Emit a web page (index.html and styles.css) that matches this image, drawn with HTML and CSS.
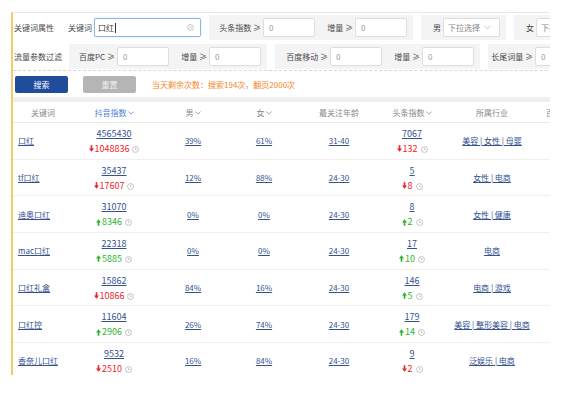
FILE: index.html
```html
<!DOCTYPE html>
<html>

<head>
    <meta charset="utf-8">
    <link rel="stylesheet" href="styles.css">
</head>

<body>
    <svg class="defs" width="0" height="0">
        <symbol id="down" viewBox="0 0 6 8"><path d="M2 0h2v4h2L3 8 0 4h2z"/></symbol>
        <symbol id="up" viewBox="0 0 6 8"><path d="M2 8h2V4h2L3 0 0 4h2z"/></symbol>
        <symbol id="clock" viewBox="0 0 10 10"><circle cx="5" cy="5" r="4.2" fill="none" stroke="currentColor" stroke-width="1"/><path d="M5 2.6V5h1.9" fill="none" stroke="currentColor" stroke-width="0.9"/></symbol>
        <symbol id="caret" viewBox="0 0 8 5"><path d="M0.5 0.5 4 4 7.5 0.5" fill="none" stroke="currentColor" stroke-width="1"/></symbol>
        <symbol id="clear" viewBox="0 0 10 10"><circle cx="5" cy="5" r="4.2" fill="none" stroke="currentColor" stroke-width="0.9"/><path d="M3.4 3.4 6.6 6.6M6.6 3.4 3.4 6.6" stroke="currentColor" stroke-width="0.9"/></symbol>
    </svg>

    <div class="panel">
        <div class="filters">
            <div class="frow">
                <span class="rlabel">关键词属性</span>
                <div class="grp grp-white">
                    <span class="lb lb-26">关键词</span>
                    <div class="inp inp-kw">口红<span class="caret-line"></span>
                        <svg class="clear"><use href="#clear"/></svg>
                    </div>
                </div>
                <div class="grp">
                    <span class="lb lb-52">头条指数 ≥</span>
                    <div class="inp">0</div>
                    <span class="lb lb-38">增量 ≥</span>
                    <div class="inp">0</div>
                </div>
                <div class="grp grp-pr">
                    <span class="lb lb-20">男</span>
                    <div class="inp sel">下拉选择<svg class="chev"><use href="#caret"/></svg></div>
                </div>
                <div class="grp">
                    <span class="lb lb-20">女</span>
                    <div class="inp sel">下拉选择<svg class="chev"><use href="#caret"/></svg></div>
                </div>
            </div>
            <div class="frow">
                <span class="rlabel rlabel-wide">流量参数过滤</span>
                <div class="grp">
                    <span class="lb lb-46">百度PC ≥</span>
                    <div class="inp">0</div>
                    <span class="lb lb-38">增量 ≥</span>
                    <div class="inp">0</div>
                </div>
                <div class="grp">
                    <span class="lb lb-53">百度移动 ≥</span>
                    <div class="inp">0</div>
                    <span class="lb lb-38">增量 ≥</span>
                    <div class="inp">0</div>
                </div>
                <div class="grp">
                    <span class="lb lb-45">长尾词量 ≥</span>
                    <div class="inp">0</div>
                </div>
            </div>
        </div>

        <div class="actions">
            <button class="btn btn-search">搜索</button>
            <button class="btn btn-reset">重置</button>
            <span class="quota">当天剩余次数：搜索194次，翻页2000次</span>
        </div>

        <div class="band"></div>

        <table class="data">
            <colgroup>
                <col class="c-kw"><col class="c-dy"><col class="c-m"><col class="c-f">
                <col class="c-age"><col class="c-tt"><col class="c-ind"><col class="c-bd">
            </colgroup>
            <tr>
                <th class="kw">关键词</th>
                <th class="sorted">抖音指数<svg class="hcaret"><use href="#caret"/></svg></th>
                <th>男<svg class="hcaret"><use href="#caret"/></svg></th>
                <th>女<svg class="hcaret"><use href="#caret"/></svg></th>
                <th>最关注年龄</th>
                <th>头条指数<svg class="hcaret"><use href="#caret"/></svg></th>
                <th>所属行业</th>
                <th class="last">百度指数<svg class="hcaret"><use href="#caret"/></svg></th>
            </tr>
            <tr>
                <td class="kw"><a href="#">口红</a></td>
                <td><a href="#" class="num">4565430</a><div class="chg down"><svg class="arr"><use href="#down"/></svg>1048836<svg class="clk"><use href="#clock"/></svg></div></td>
                <td><a href="#">39%</a></td>
                <td><a href="#">61%</a></td>
                <td><a href="#">31-40</a></td>
                <td><a href="#" class="num">7067</a><div class="chg down"><svg class="arr"><use href="#down"/></svg>132<svg class="clk"><use href="#clock"/></svg></div></td>
                <td><a href="#">美容 | 女性 | 母婴</a></td>
                <td></td>
            </tr>
            <tr>
                <td class="kw"><a href="#">tf口红</a></td>
                <td><a href="#" class="num">35437</a><div class="chg down"><svg class="arr"><use href="#down"/></svg>17607<svg class="clk"><use href="#clock"/></svg></div></td>
                <td><a href="#">12%</a></td>
                <td><a href="#">88%</a></td>
                <td><a href="#">24-30</a></td>
                <td><a href="#" class="num">5</a><div class="chg down"><svg class="arr"><use href="#down"/></svg>8<svg class="clk"><use href="#clock"/></svg></div></td>
                <td><a href="#">女性 | 电商</a></td>
                <td></td>
            </tr>
            <tr>
                <td class="kw"><a href="#">迪奥口红</a></td>
                <td><a href="#" class="num">31070</a><div class="chg up"><svg class="arr"><use href="#up"/></svg>8346<svg class="clk"><use href="#clock"/></svg></div></td>
                <td><a href="#">0%</a></td>
                <td><a href="#">0%</a></td>
                <td><a href="#">24-30</a></td>
                <td><a href="#" class="num">8</a><div class="chg up"><svg class="arr"><use href="#up"/></svg>2<svg class="clk"><use href="#clock"/></svg></div></td>
                <td><a href="#">女性 | 健康</a></td>
                <td></td>
            </tr>
            <tr>
                <td class="kw"><a href="#">mac口红</a></td>
                <td><a href="#" class="num">22318</a><div class="chg up"><svg class="arr"><use href="#up"/></svg>5885<svg class="clk"><use href="#clock"/></svg></div></td>
                <td><a href="#">0%</a></td>
                <td><a href="#">0%</a></td>
                <td><a href="#">24-30</a></td>
                <td><a href="#" class="num">17</a><div class="chg up"><svg class="arr"><use href="#up"/></svg>10<svg class="clk"><use href="#clock"/></svg></div></td>
                <td><a href="#">电商</a></td>
                <td></td>
            </tr>
            <tr>
                <td class="kw"><a href="#">口红礼盒</a></td>
                <td><a href="#" class="num">15862</a><div class="chg down"><svg class="arr"><use href="#down"/></svg>10866<svg class="clk"><use href="#clock"/></svg></div></td>
                <td><a href="#">84%</a></td>
                <td><a href="#">16%</a></td>
                <td><a href="#">24-30</a></td>
                <td><a href="#" class="num">146</a><div class="chg up"><svg class="arr"><use href="#up"/></svg>5<svg class="clk"><use href="#clock"/></svg></div></td>
                <td><a href="#">电商 | 游戏</a></td>
                <td></td>
            </tr>
            <tr>
                <td class="kw"><a href="#">口红控</a></td>
                <td><a href="#" class="num">11604</a><div class="chg up"><svg class="arr"><use href="#up"/></svg>2906<svg class="clk"><use href="#clock"/></svg></div></td>
                <td><a href="#">26%</a></td>
                <td><a href="#">74%</a></td>
                <td><a href="#">24-30</a></td>
                <td><a href="#" class="num">179</a><div class="chg up"><svg class="arr"><use href="#up"/></svg>14<svg class="clk"><use href="#clock"/></svg></div></td>
                <td><a href="#">美容 | 整形美容 | 电商</a></td>
                <td></td>
            </tr>
            <tr>
                <td class="kw"><a href="#">香奈儿口红</a></td>
                <td><a href="#" class="num">9532</a><div class="chg down"><svg class="arr"><use href="#down"/></svg>2510<svg class="clk"><use href="#clock"/></svg></div></td>
                <td><a href="#">16%</a></td>
                <td><a href="#">84%</a></td>
                <td><a href="#">24-30</a></td>
                <td><a href="#" class="num">9</a><div class="chg down"><svg class="arr"><use href="#down"/></svg>2<svg class="clk"><use href="#clock"/></svg></div></td>
                <td><a href="#">泛娱乐 | 电商</a></td>
                <td></td>
            </tr>
        </table>
    </div>
</body>

</html>
```

FILE: styles.css
```css
body {
    margin: 0;
    background-color: #fff;
    font-family: "Noto Sans CJK SC", "Noto Sans", sans-serif;
    font-size: 8px;
    color: #555;
}

.defs {
    position: absolute;
}

.panel {
    margin: 12px 0 0 11px;
    width: 537px;
    height: 362px;
    border-left: 2px solid #f3cb6a;
    border-top: 1px solid #e8e8e8;
    overflow: hidden;
}

/* filter rows */
.filters {
    padding: 2px 0 1px;
    border-bottom: 1px dashed #d6d6d6;
    width: 600px;
}

.frow {
    display: flex;
    align-items: center;
    gap: 8px;
    height: 25px;
}

.frow + .frow {
    margin-top: 4px;
}

.rlabel {
    width: 52px;
    padding-left: 1px;
    margin-right: -8px;
    color: #4a4a4a;
}

.rlabel-wide {
    width: 55px;
}

.grp {
    display: flex;
    align-items: center;
    height: 25px;
    padding-right: 6px;
    background-color: #f4f4f4;
}

.grp-white {
    background-color: transparent;
    padding-right: 0;
}

.grp-pr {
    padding-right: 6px;
}

.lb {
    text-align: right;
    padding-right: 2px;
    color: #4a4a4a;
    white-space: nowrap;
}

.lb-20 { width: 20px; }
.lb-26 { width: 26px; }
.lb-38 { width: 38px; }
.lb-45 { width: 45px; }
.lb-46 { width: 46px; }
.lb-52 { width: 52px; }
.lb-53 { width: 53px; }

.inp {
    box-sizing: border-box;
    display: flex;
    align-items: center;
    width: 52px;
    height: 19px;
    padding-left: 5px;
    background-color: #fff;
    border: 1px solid #dedede;
    border-radius: 2px;
    color: #999;
}

.inp-kw {
    width: 107px;
    padding-left: 3px;
    border-color: #8fb4e6;
    box-shadow: 0 0 2px #c6dbf5;
    color: #333;
    position: relative;
}

.caret-line {
    width: 1px;
    height: 10px;
    margin-left: 1px;
    background-color: #333;
}

.clear {
    position: absolute;
    right: 6px;
    top: 5px;
    width: 7px;
    height: 7px;
    color: #aaa;
}

.sel {
    width: 57px;
    justify-content: space-between;
    padding: 0 8px 0 4px;
    color: #888;
}

.chev {
    width: 7px;
    height: 5px;
    color: #bbb;
}

/* buttons */
.actions {
    display: flex;
    align-items: center;
    margin-top: 5px;
    padding-left: 2px;
}

.btn {
    width: 53px;
    height: 17px;
    padding: 0;
    border: none;
    border-radius: 2px;
    font-family: inherit;
    font-size: 8px;
    color: #fff;
}

.btn-search {
    background-color: #1f4c9b;
}

.btn-reset {
    margin-left: 15px;
    background-color: #b5b5b5;
    color: #eee;
}

.quota {
    margin-left: 16px;
    color: #f5861f;
}

.band {
    margin-top: 4px;
    height: 5px;
    background-color: #efefef;
}

/* table */
.data {
    table-layout: fixed;
    width: 588px;
    border-collapse: collapse;
}

.c-kw { width: 60px; }
.c-dy { width: 82px; }
.c-m { width: 76px; }
.c-f { width: 66px; }
.c-age { width: 84px; }
.c-tt { width: 62px; }
.c-ind { width: 98px; }
.c-bd { width: 60px; }

th {
    height: 20px;
    padding: 0;
    font-weight: normal;
    color: #888;
    border-bottom: 1px solid #e8e8e8;
    white-space: nowrap;
}

th.sorted {
    color: #4a80d9;
}

th.last {
    text-align: left;
    padding-left: 5px;
}

.hcaret {
    width: 6px;
    height: 4px;
    margin-left: 1px;
    vertical-align: 1px;
}

td {
    height: 35.7px;
    padding: 0;
    text-align: center;
    border-bottom: 1px solid #efefef;
    white-space: nowrap;
    line-height: 15px;
}

td.kw {
    text-align: left;
    padding-left: 5px;
}

a {
    color: #33528f;
    text-decoration: underline;
}

a.num {
    font-size: 9px;
}

.chg {
    font-size: 9px;
    line-height: 15px;
}

.chg.down {
    color: #f0222a;
}

.chg.up {
    color: #2cb52c;
}

.arr {
    width: 5px;
    height: 7px;
    margin-right: 1px;
    fill: currentColor;
    vertical-align: -0.5px;
}

.clk {
    width: 7px;
    height: 7px;
    margin-left: 3px;
    color: #aaa;
    vertical-align: -1px;
}
```
